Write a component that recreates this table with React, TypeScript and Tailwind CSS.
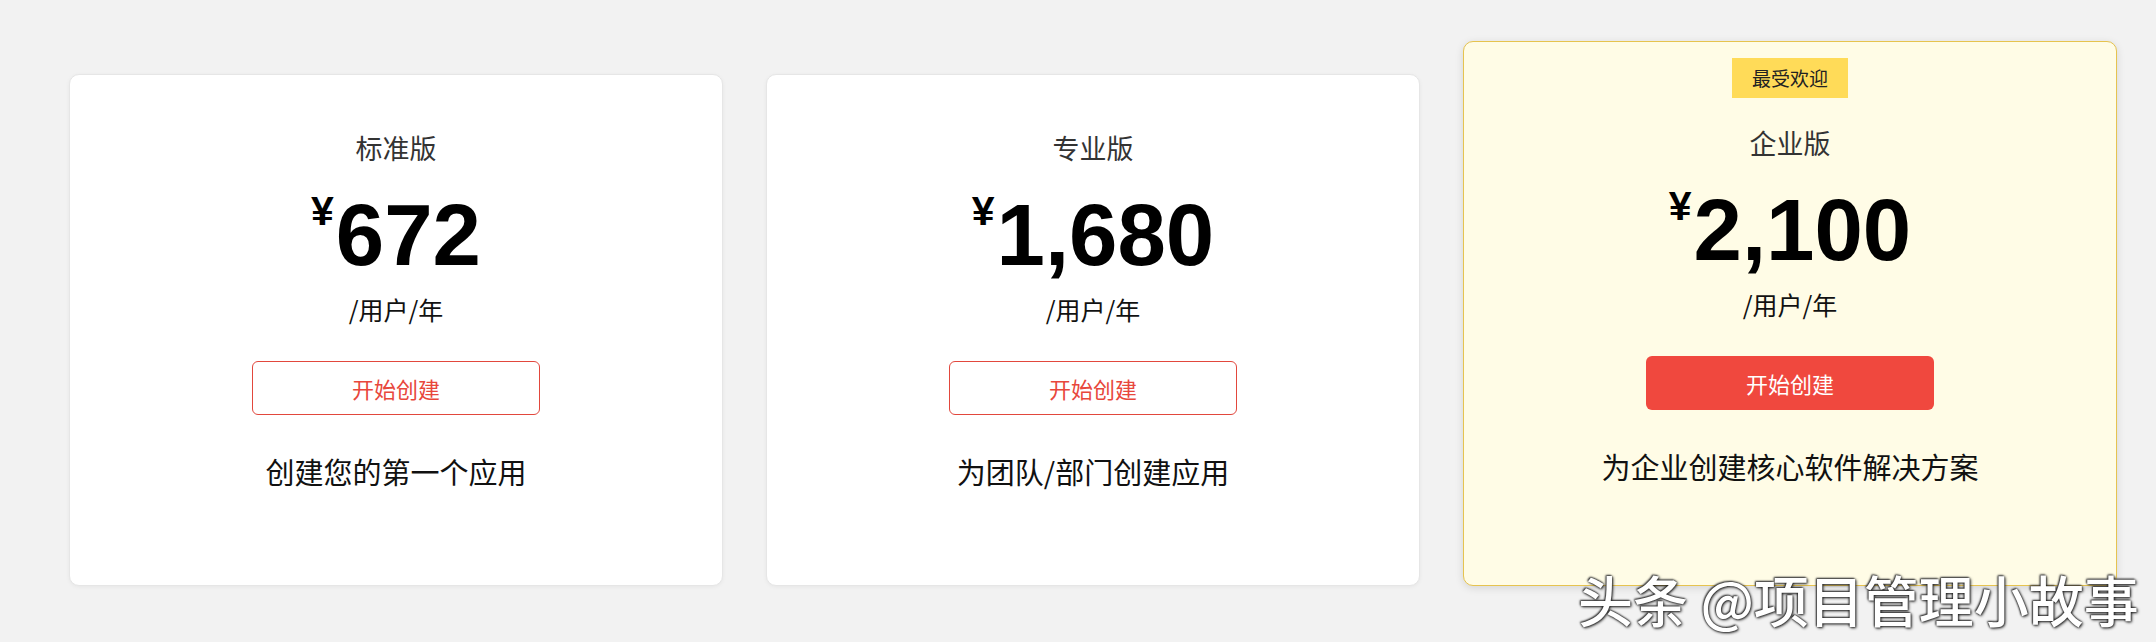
const cjk = "font-['Noto_Sans_CJK_SC',sans-serif]";
const num = "font-['Liberation_Sans','Noto_Sans_CJK_SC',sans-serif]";

type Plan = {
  name: string;
  price: string;
  desc: string;
  popular?: boolean;
};

const plans: Plan[] = [
  {name: '标准版', price: '672', desc: '创建您的第一个应用'},
  {name: '专业版', price: '1,680', desc: '为团队/部门创建应用'},
  {name: '企业版', price: '2,100', desc: '为企业创建核心软件解决方案', popular: true},
];

function PlanCard({plan}: {plan: Plan}) {
  return (
    <div
      className={`w-[654px] rounded-[10px] border flex flex-col items-center ${
        plan.popular
          ? 'h-[545px] bg-[#fffce6] border-[#e6c34f] shadow-[0_2px_8px_rgba(0,0,0,0.12)] pt-[16px]'
          : 'h-[512px] bg-white border-[#e6e6e6] shadow-[0_1px_4px_rgba(0,0,0,0.05)] pt-[55px]'
      }`}
    >
      {plan.popular && (
        <div className={`${cjk} h-[40px] px-[20px] bg-[#ffdb58] text-[#222] text-[19px] leading-[40px] mb-[27px]`}>
          最受欢迎
        </div>
      )}
      <div className={`${cjk} text-[27px] leading-[36px] text-[#333]`}>{plan.name}</div>
      <div className={`${num} flex items-start mt-[25px] text-black font-bold`}>
        <span className="text-[41px] leading-none mr-[2px]">¥</span>
        <span className="text-[87px] leading-none">{plan.price}</span>
      </div>
      <div className={`${cjk} mt-[15px] text-[25px] leading-[32px] text-[#111]`}>/用户/年</div>
      <button
        className={`${cjk} mt-[36px] w-[288px] h-[54px] rounded-[6px] text-[22px] ${
          plan.popular
            ? 'bg-[#f0483e] text-white'
            : 'border border-[#e2473d] text-[#e8473c] bg-transparent'
        }`}
      >
        开始创建
      </button>
      <div className={`${cjk} mt-[36px] text-[29px] leading-[40px] text-[#111]`}>{plan.desc}</div>
    </div>
  );
}

export default function App() {
  return (
    <div className="relative min-h-[642px] bg-[#f2f2f2] overflow-hidden">
      <div className="flex items-end gap-[43px] pl-[69px] pt-[41px]">
        {plans.map((p) => (
          <PlanCard key={p.name} plan={p} />
        ))}
      </div>
      {/* watermark */}
      <div
        className={`${cjk} absolute left-[1578px] top-[566px] text-[55px] leading-[64px] font-medium text-white whitespace-nowrap [text-shadow:0_0_2px_#222,1px_1px_3px_#222,-1px_-1px_2px_#444]`}
      >
        头条 @项目管理小故事
      </div>
    </div>
  );
}
